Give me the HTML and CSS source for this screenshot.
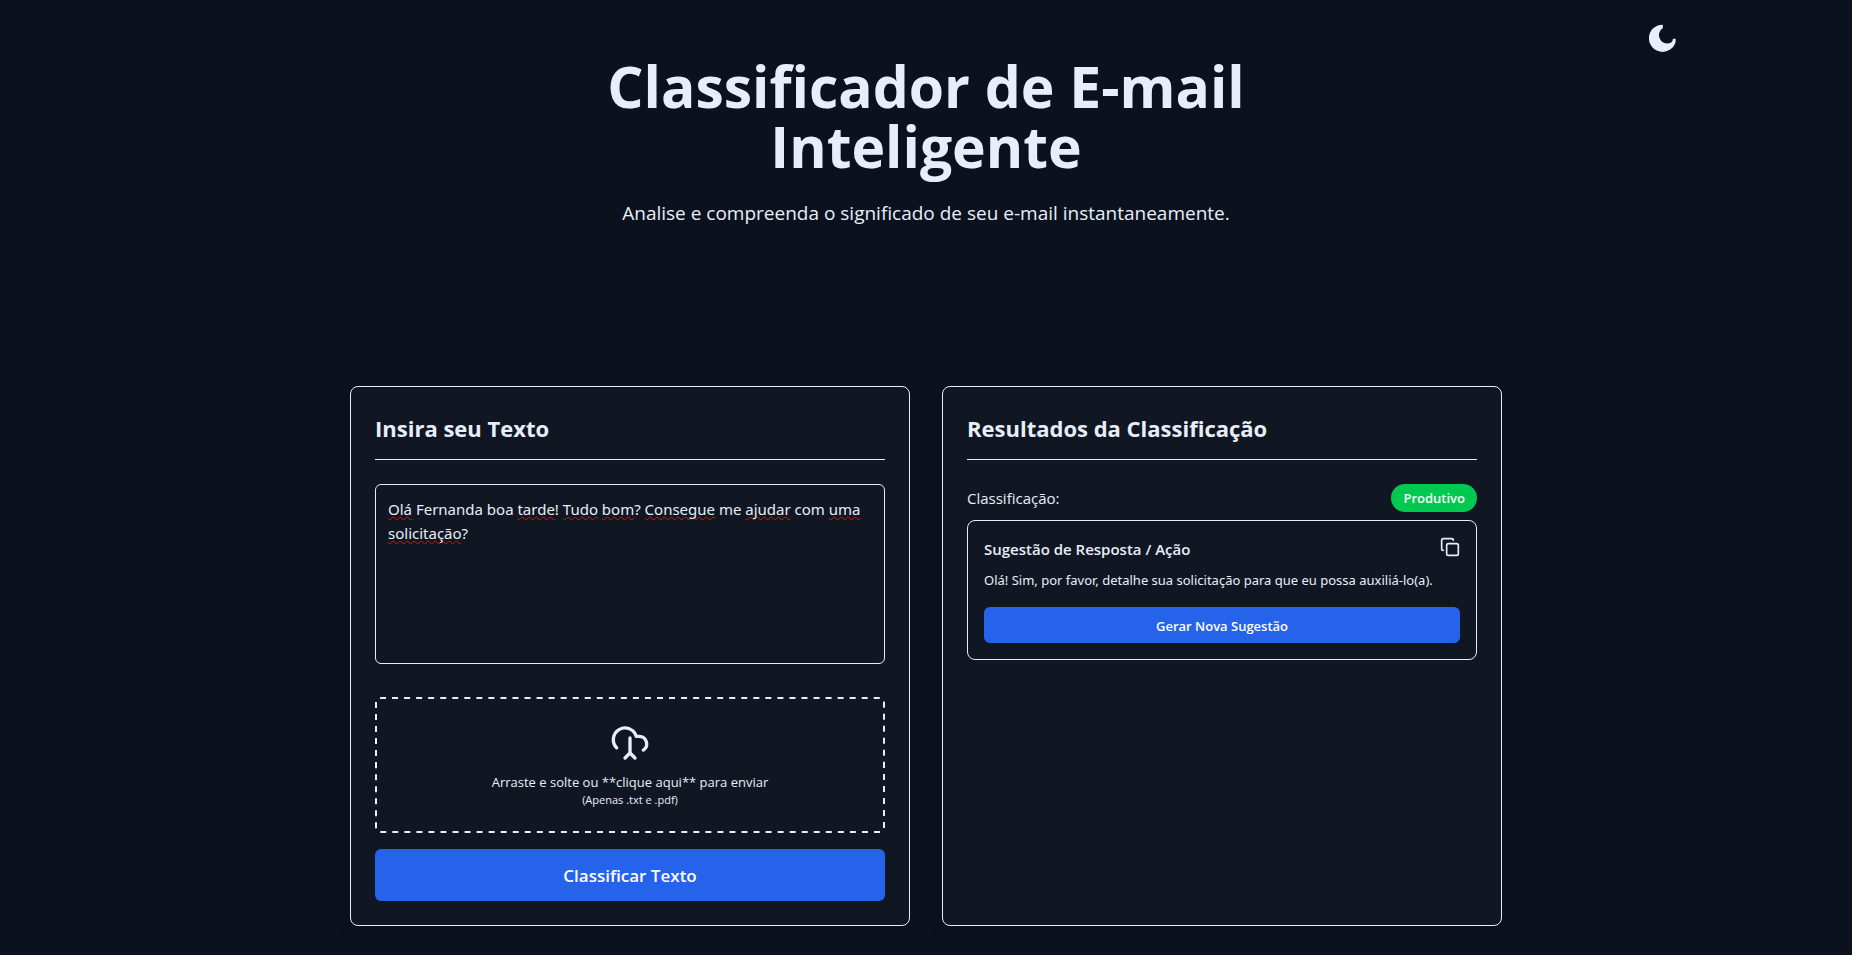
FILE: index.html
```html
<!DOCTYPE html>
<html lang="pt-BR">
<head>
  <meta charset="utf-8">
  <meta name="viewport" content="width=device-width, initial-scale=1">
  <title>Classificador de E-mail Inteligente</title>
  <link rel="stylesheet" href="styles.css">
</head>
<body>
  <div class="page">
    <div class="topbar">
      <button class="icon-button" type="button" aria-label="Alternar tema">
        <svg class="icon-moon" viewBox="0 0 24 24" fill="currentColor" aria-hidden="true"><path d="M12.600 2v2.700A6.300 6.300 0 0 0 9.700 10a6.300 6.300 0 0 0 6.300 6.200c1.600 0 2.900-.6 3.700-1.700.3-.6.500-1.200.5-1.900h2V15A10.200 10.200 0 1 1 12.600 2Z"/></svg>
      </button>
    </div>
    <header class="hero">
      <h1 class="hero-title">Classificador de E-mail Inteligente</h1>
      <p class="hero-subtitle">Analise e compreenda o significado de seu e-mail instantaneamente.</p>
    </header>
    <main class="panels">
      <section class="card">
        <h2 class="card-title"><label for="email-text">Insira seu Texto</label></h2>
        <div class="editor">
          <div class="editor-marks" aria-hidden="true"><u>Olá</u> Fernanda boa <u>tarde</u>! <u>Tudo</u> <u>bom</u>? <u>Consegue</u> me <u>ajudar</u> com <u>uma</u> <u>solicitação</u>?</div>
          <textarea class="editor-input" id="email-text" spellcheck="false">Olá Fernanda boa tarde! Tudo bom? Consegue me ajudar com uma solicitação?</textarea>
        </div>
        <button class="dropzone" type="button">
          <svg class="dropzone-frame" fill="none" stroke="currentColor" stroke-width="2" aria-hidden="true"><rect class="dropzone-dashes" x="1" y="1" rx="4" pathLength="1272" stroke-dasharray="6 6"/></svg>
          <svg class="icon-cloud" viewBox="0 0 24 24" fill="none" stroke="currentColor" stroke-width="2" stroke-linecap="round" stroke-linejoin="round" aria-hidden="true"><path d="M4 14.899A7 7 0 1 1 15.71 8h1.79a4.5 4.5 0 0 1 2.5 8.242"/><path d="M12 9v9"/><path d="m9 21 3-3 3 3"/></svg>
          <span class="dropzone-text">Arraste e solte ou **clique aqui** para enviar</span>
          <span class="dropzone-hint">(Apenas .txt e .pdf)</span>
        </button>
        <button class="button button-large" type="button">Classificar Texto</button>
      </section>
      <section class="card">
        <h2 class="card-title">Resultados da Classificação</h2>
        <div class="result-row">
          <span class="result-label">Classificação:</span>
          <span class="badge">Produtivo</span>
        </div>
        <article class="suggestion">
          <div class="suggestion-head">
            <h3 class="suggestion-title">Sugestão de Resposta / Ação</h3>
            <button class="icon-button" type="button" aria-label="Copiar">
              <svg class="icon-copy" viewBox="0 0 24 24" fill="none" stroke="currentColor" stroke-width="2" stroke-linecap="round" stroke-linejoin="round" aria-hidden="true"><rect x="8" y="8" width="14" height="14" rx="2"/><path d="M4 16c-1.100 0-2-.9-2-2V4c0-1.100.9-2 2-2h10c1.100 0 2 .9 2 2"/></svg>
            </button>
          </div>
          <p class="suggestion-text">Olá! Sim, por favor, detalhe sua solicitação para que eu possa auxiliá-lo(a).</p>
          <button class="button" type="button">Gerar Nova Sugestão</button>
        </article>
      </section>
    </main>
  </div>
</body>
</html>
```
FILE: styles.css
```css
:root {
  --bg: #0b121e;
  --card: #101722;
  --text: #e8eef9;
  --blue: #2563eb;
  --green: #00c951;
}

*,
*::before,
*::after {
  box-sizing: border-box;
  margin: 0;
  padding: 0;
}

body {
  min-height: 100vh;
  background: var(--bg);
  color: var(--text);
  font-family: "Segoe UI", "Open Sans", "Noto Sans", sans-serif;
  font-size: 15px;
  line-height: 24px;
}

button,
textarea {
  font: inherit;
  color: inherit;
  background: none;
  border: 0;
}

button {
  cursor: pointer;
}

svg {
  display: block;
}

.page {
  max-width: 1536px;
  margin: 0 auto;
  padding: 22px 16px 28px;
}

.topbar {
  display: flex;
  justify-content: flex-end;
}

.icon-moon {
  width: 32px;
  height: 32px;
}

.hero {
  max-width: 768px;
  margin: 2px auto 159px;
  text-align: center;
}

.hero-title {
  margin-bottom: 23px;
  font-size: 57px;
  font-weight: 700;
  line-height: 60px;
}

.hero-subtitle {
  font-size: 19px;
  line-height: 28px;
}

.panels {
  display: grid;
  grid-template-columns: 1fr 1fr;
  gap: 32px;
  max-width: 1152px;
  margin: 0 auto;
}

.card {
  padding: 24px;
  border: 1px solid var(--text);
  border-radius: 8px;
  background: var(--card);
  box-shadow: 0 10px 15px -3px rgb(0 0 0 / 10%);
}

.card-title {
  margin-bottom: 24px;
  padding-bottom: 14px;
  border-bottom: 1px solid var(--text);
  font-size: 22px;
  font-weight: 700;
  line-height: 34px;
}

.editor {
  display: grid;
  margin-bottom: 33px;
}

.editor-marks,
.editor-input {
  grid-area: 1 / 1;
  padding: 12px;
  border: 1px solid transparent;
  border-radius: 6px;
  font-family: "Segoe UI", "Noto Sans", sans-serif;
}

.editor-marks {
  color: transparent;
}

.editor-marks u {
  text-decoration: underline wavy #f00 1px;
  text-decoration-skip-ink: none;
  text-underline-offset: 1px;
}

.editor-input {
  display: block;
  width: 100%;
  height: 180px;
  border-color: var(--text);
  resize: none;
}

.dropzone {
  position: relative;
  display: flex;
  flex-direction: column;
  align-items: center;
  width: 100%;
  margin-bottom: 16px;
  padding: 26px 24px 25px;
}

.dropzone-frame {
  position: absolute;
  inset: 0;
  width: 100%;
  height: 100%;
}

.dropzone-dashes {
  width: calc(100% - 2px);
  height: calc(100% - 2px);
}

.icon-cloud {
  width: 40px;
  height: 40px;
  margin-bottom: 9px;
}

.dropzone-text {
  font-size: 13px;
  line-height: 20px;
}

.dropzone-hint {
  font-size: 11px;
  line-height: 16px;
}

.button {
  display: block;
  width: 100%;
  padding: 9px 16px 7px;
  border-radius: 6px;
  background: var(--blue);
  color: #fff;
  font-size: 13px;
  font-weight: 600;
  line-height: 20px;
}

.button-large {
  padding: 13px 16px 11px;
  font-size: 17px;
  line-height: 28px;
}

.result-row {
  display: flex;
  align-items: center;
  justify-content: space-between;
  margin-bottom: 8px;
}

.badge {
  padding: 4px 12px;
  border-radius: 14px;
  background: var(--green);
  color: #fff;
  font-size: 13px;
  font-weight: 600;
  line-height: 20px;
}

.suggestion {
  padding: 16px;
  border: 1px solid var(--text);
  border-radius: 8px;
}

.suggestion-head {
  display: flex;
  align-items: flex-start;
  justify-content: space-between;
  margin-bottom: 8px;
}

.suggestion-title {
  font-size: 15px;
  font-weight: 600;
  line-height: 24px;
}

.icon-copy {
  width: 20px;
  height: 20px;
}

.suggestion-text {
  margin-bottom: 16px;
  font-family: "Segoe UI", "Noto Sans", sans-serif;
  font-size: 13px;
  line-height: 22px;
}
```
